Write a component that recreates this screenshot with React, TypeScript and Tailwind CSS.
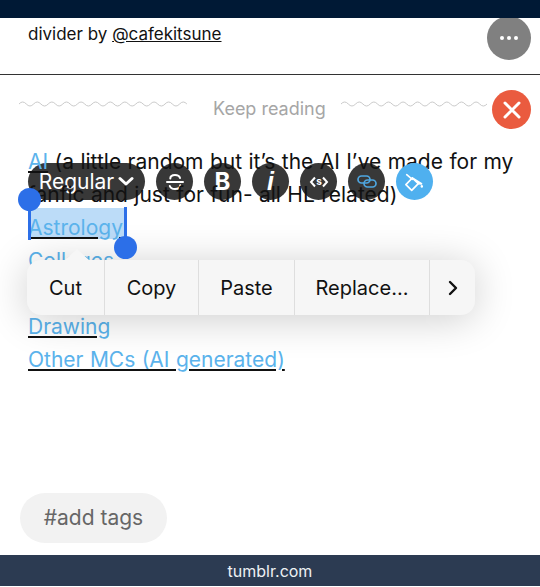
const Wave = ({ width }: { width: number }) => {
  const period = 14.6;
  let d = `M0 4 q${period / 4} -4 ${period / 2} 0`;
  const count = Math.floor((width * 2) / period) - 1;
  for (let i = 0; i < count; i++) {
    d += ` t${period / 2} 0`;
  }
  return (
    <svg width={width} height="8" viewBox={`0 0 ${width} 8`} fill="none" className="shrink-0">
      <path d={d} stroke="#c4c4c4" strokeWidth="0.9" />
    </svg>
  );
};

const ToolCircle = ({ children, blue }: { children: React.ReactNode; blue?: boolean }) => (
  <div
    className={`flex h-[37px] w-[37px] items-center justify-center rounded-full ${
      blue ? "relative z-[2] bg-[#4fb0ef]" : "bg-[#383838]"
    }`}
  >
    {children}
  </div>
);

const links = ["Astrology", "Collages", "", "Drawing", "Other MCs (AI generated)"];

export default function App() {
  return (
    <div className="relative flex h-[587px] w-[540px] flex-col overflow-hidden bg-white font-['Inter',sans-serif] text-[#111]">
      <div className="relative z-10 h-[18px] bg-[#001935]" />

      <div className="relative h-[57px] border-b border-[#333] pl-[28px] pt-[4px] text-[17px] leading-[24px]">
        divider by <span className="underline">@cafekitsune</span>
        <div className="absolute right-[9px] top-[-2px] flex h-[44px] w-[44px] items-center justify-center rounded-full bg-[#808080]">
          <div className="flex gap-[3px]">
            <span className="h-[4px] w-[4px] rounded-full bg-white" />
            <span className="h-[4px] w-[4px] rounded-full bg-white" />
            <span className="h-[4px] w-[4px] rounded-full bg-white" />
          </div>
        </div>
      </div>

      <div className="relative flex h-[70px] items-start gap-[15px] pl-[19px] pt-[25px]">
        <Wave width={175} />
        <span className="ml-[4px] mt-[-3px] text-[18px] leading-[24px] text-[#a6a6a6]">Keep reading</span>
        <Wave width={150} />
        <div className="absolute right-[9px] top-[15px] flex h-[39px] w-[39px] items-center justify-center rounded-full bg-[#ea5b3f]">
          <svg width="20" height="20" viewBox="0 0 20 20" fill="none">
            <path d="M3 3L17 17M17 3L3 17" stroke="white" strokeWidth="3" strokeLinecap="round" />
          </svg>
        </div>
      </div>

      <div className="pl-[28px] pr-[20px] text-[21px] leading-[33px] [word-spacing:0.5px]">
        {/* text sits above the format bar, like in the screenshot */}
        <p className="relative z-[1]">
          <span className="text-[#5bb3ec] underline decoration-[#111]">AI</span> (a little random but it’s the AI I’ve
          made for my fanfic and just for fun- all HL related)
        </p>
        {links.map((link, i) => (
          <p key={i} className="relative h-[33px]">
            {i === 0 && <span className="absolute left-0 top-[-3px] h-[31px] w-[98px] bg-[#bcdcf8]" />}
            <span className="relative text-[#5bb3ec] underline decoration-[#111]">{link}</span>
          </p>
        ))}
      </div>

      <div className="mt-auto pb-[12px] pl-[20px]">
        <div className="flex h-[50px] w-[147px] items-center justify-center rounded-full bg-[#f2f2f2] text-[21px] text-[#666]">
          #add tags
        </div>
      </div>

      <div className="mb-px flex h-[31px] items-center justify-center bg-[#2c3b52] text-[16px] text-[#eef1f4]">
        tumblr.com
      </div>

      <div className="absolute left-[28px] top-[163px] flex items-center gap-[11px]">
        <div className="flex h-[37px] w-[117px] items-center justify-center gap-[4px] rounded-full bg-[#383838] text-[21px] text-white">
          Regular
          <svg width="16" height="11" viewBox="0 0 16 11" fill="none">
            <path d="M2 2.5L8 8L14 2.5" stroke="white" strokeWidth="3" strokeLinecap="round" strokeLinejoin="round" />
          </svg>
        </div>
        <ToolCircle>
          <svg width="22" height="22" viewBox="0 0 22 22" fill="none" stroke="white" strokeWidth="2" strokeLinecap="round">
            <path d="M16 7C15.4 5 13.4 4 11 4C8.2 4 6.3 5.3 6.3 7.6" />
            <path d="M3 11H19" />
            <path d="M16.2 14.3C16.2 16.8 14 18 11 18C8.3 18 6.4 16.9 5.8 15" />
          </svg>
        </ToolCircle>
        <ToolCircle>
          <span className="text-[24px] font-bold text-white">B</span>
        </ToolCircle>
        <ToolCircle>
          <span className="font-['Liberation_Sans',sans-serif] text-[25px] font-bold italic text-white">i</span>
        </ToolCircle>
        <ToolCircle>
          <svg width="20" height="14" viewBox="0 0 20 14" fill="none" stroke="white">
            <path d="M6 2.5L2 7L6 11.5M14 2.5L18 7L14 11.5" strokeWidth="2" />
            <text x="10" y="10" fontSize="10" fontWeight="700" fill="white" stroke="none" textAnchor="middle">
              s
            </text>
          </svg>
        </ToolCircle>
        <ToolCircle>
          <svg width="20" height="13" viewBox="0 0 20 13" fill="none" stroke="#4ea6e0" strokeWidth="1.7">
            <rect x="1" y="1" width="12" height="7" rx="3.5" />
            <rect x="7" y="5" width="12" height="7" rx="3.5" />
          </svg>
        </ToolCircle>
        <ToolCircle blue>
          <svg width="22" height="22" viewBox="0 0 22 22" fill="none" stroke="white" strokeWidth="1.7" strokeLinecap="round" strokeLinejoin="round">
            <path d="M2.7 3.7L8.3 8.3" />
            <path d="M8.3 7L1.9 13.7L7.7 19.3L14.3 12.7L8.3 7Z" />
            <path d="M8.3 7L17.5 12.8L14.3 12.7" fill="white" />
            <path d="M17.8 15.2V15.6" strokeWidth="2.4" />
          </svg>
        </ToolCircle>
      </div>

      <div className="absolute left-[28px] top-[200px] z-[2] h-[40px] w-[3px] bg-[#2c6fe8]" />
      <div className="absolute left-[124px] top-[207px] z-[2] h-[36px] w-[3px] bg-[#2c6fe8]" />
      <div className="absolute left-[18px] top-[188px] z-[2] h-[23px] w-[23px] rounded-full bg-[#2c6fe8]" />
      <div className="absolute left-[114px] top-[236px] z-[2] h-[23px] w-[23px] rounded-full bg-[#2c6fe8]" />

      <div className="absolute left-[27px] top-[260px] flex h-[55px] w-[448px] items-center rounded-[14px] bg-[#f6f6f6] text-[20px] text-[#111] shadow-[0_4px_40px_rgba(0,0,0,0.2)]">
        <div className="absolute left-[38px] top-[-11px] h-0 w-0 border-x-[12px] border-b-[11px] border-x-transparent border-b-[#f6f6f6]" />
        <div className="flex h-full w-[78px] items-center justify-center border-r border-[#dedede]">Cut</div>
        <div className="flex h-full w-[94px] items-center justify-center border-r border-[#dedede]">Copy</div>
        <div className="flex h-full w-[96px] items-center justify-center border-r border-[#dedede]">Paste</div>
        <div className="flex h-full w-[135px] items-center justify-center border-r border-[#dedede]">Replace...</div>
        <div className="flex h-full flex-1 items-center justify-center">
          <svg width="12" height="16" viewBox="0 0 12 16" fill="none">
            <path d="M3 2L9 8L3 14" stroke="#111" strokeWidth="2.4" strokeLinecap="round" strokeLinejoin="round" />
          </svg>
        </div>
      </div>
    </div>
  );
}
